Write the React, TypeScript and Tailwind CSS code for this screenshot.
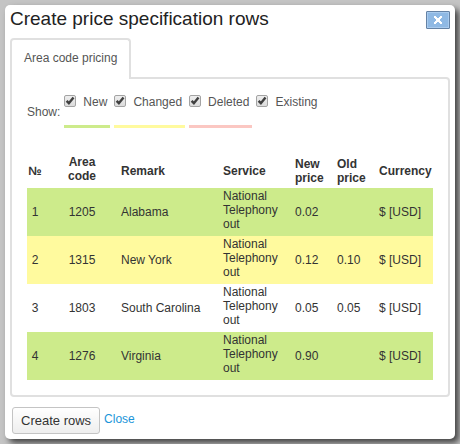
const filters = [
  { id: 'new', label: 'New', border: 'border-[#cdeb8b]' },
  { id: 'changed', label: 'Changed', border: 'border-[#fffa9e]' },
  { id: 'deleted', label: 'Deleted', border: 'border-[#fbc7c2]' },
  { id: 'existing', label: 'Existing', border: 'border-transparent' },
];

const rows = [
  { code: '1205', remark: 'Alabama', newPrice: '0.02', oldPrice: '', color: 'bg-[#cdeb8b]' },
  { code: '1315', remark: 'New York', newPrice: '0.12', oldPrice: '0.10', color: 'bg-[#fffa9e]' },
  { code: '1803', remark: 'South Carolina', newPrice: '0.05', oldPrice: '0.05', color: 'bg-white' },
  { code: '1276', remark: 'Virginia', newPrice: '0.90', oldPrice: '', color: 'bg-[#cdeb8b]' },
];

function FilterCheckbox({ id, label, border }: { id: string; label: string; border: string }) {
  return (
    <label htmlFor={id} className={`flex items-start gap-[7px] h-[33px] pr-[3px] border-b-3 ${border}`}>
      <span className="grid size-3">
        <input
          id={id}
          type="checkbox"
          defaultChecked
          className="peer col-start-1 row-start-1 appearance-none size-3 rounded-xs border border-[#a3a3a3] bg-linear-to-b from-[#eeeeee] to-[#dcdcdc]"
        />
        <svg
          viewBox="0 0 12 12"
          className="col-start-1 row-start-1 size-3 pointer-events-none invisible peer-checked:visible"
          fill="none"
          stroke="#404040"
          strokeWidth="2.4"
        >
          <path d="M2.6 5.8 4.9 8.2 9.5 2.4" />
        </svg>
      </span>
      <span>{label}</span>
    </label>
  );
}

export default function App() {
  return (
    <div className="min-h-screen bg-[#c4c4c4] p-[5px] font-['Liberation_Sans',Arial,sans-serif] text-xs leading-[14px] text-[#333333]">
      <div className="rounded-[5px] bg-white px-[5px] pt-[6px] pb-[5px] shadow-[4px_4px_6px_#444444]">
        {/* Title bar */}
        <div className="flex items-start justify-between">
          <h1 className="text-[19px] leading-4 text-[#222222]">Create price specification rows</h1>
          <button
            aria-label="Close dialog"
            className="flex h-[18px] w-6 items-center justify-center rounded-[1px] border border-[#6482a5] bg-[#8fb9e4] inset-ring inset-ring-[#a9cbee]"
          >
            <svg width="8" height="8" viewBox="0 0 8 8" fill="#ffffff" shapeRendering="crispEdges">
              <path d="M0 0h2v1h1v1h2V1h1V0h2v2H7v1H6v2h1v1h1v2H6V7H5V6H3v1H2v1H0V6h1V5h1V3H1V2H0z" />
            </svg>
          </button>
        </div>

        {/* Tabs */}
        <div className="mt-[9px] flex">
          <button className="relative -mb-[2px] h-[41px] rounded-t border-2 border-b-0 border-[#e0e0e0] bg-white px-3 pb-1 text-[#555555]">
            Area code pricing
          </button>
        </div>

        <div className="rounded-b rounded-tr border-2 border-[#e0e0e0] px-[15px] pt-4 pb-[15px]">
          <div className="flex items-center gap-1 text-[#555555]">
            <span>Show:</span>
            {filters.map((filter) => (
              <FilterCheckbox key={filter.id} {...filter} />
            ))}
          </div>

          <table className="mt-[26px] w-full table-fixed border-collapse text-left">
            <colgroup>
              <col className="w-4" />
              <col className="w-[78px]" />
              <col />
              <col className="w-[72px]" />
              <col className="w-[42px]" />
              <col className="w-[42px]" />
              <col className="w-[54px]" />
            </colgroup>
            <thead>
              <tr className="h-[34px]">
                <th className="text-center">№</th>
                <th className="px-5 pb-1 text-center">Area code</th>
                <th>Remark</th>
                <th>Service</th>
                <th>New price</th>
                <th>Old price</th>
                <th>Currency</th>
              </tr>
            </thead>
            <tbody>
              {rows.map((row, index) => (
                <tr key={row.code} className={row.color}>
                  <td className="text-center">{index + 1}</td>
                  <td className="text-center">{row.code}</td>
                  <td>{row.remark}</td>
                  <td className="pt-px pr-2 pb-[5px]">National Telephony out</td>
                  <td>{row.newPrice}</td>
                  <td>{row.oldPrice}</td>
                  <td>$ [USD]</td>
                </tr>
              ))}
            </tbody>
          </table>
        </div>

        {/* Actions */}
        <div className="mt-[10px] flex items-start gap-1 px-[2px]">
          <button className="h-[27px] rounded-[3px] border border-[#c4c4c4] bg-linear-to-b from-white to-[#eeeeee] px-2 text-[13px]">
            Create rows
          </button>
          <a href="#close" className="mt-[5px] text-[#1b95d9]">Close</a>
        </div>
      </div>
    </div>
  );
}
